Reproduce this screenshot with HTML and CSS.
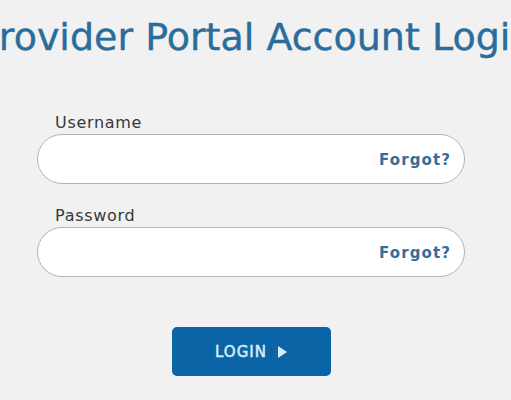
FILE: index.html
```html
<!DOCTYPE html>
<html lang="en">
<head>
<meta charset="utf-8">
<title>Provider Portal Account Login</title>
<link rel="stylesheet" href="styles.css">
</head>
<body>
  <header class="title-wrap">
    <h1 class="title">Provider Portal Account Login</h1>
  </header>
  <form class="login-form">
    <label class="field-label" for="username">Username</label>
    <div class="field">
      <input class="field-input" id="username" type="text">
      <a class="forgot" href="#">Forgot?</a>
    </div>
    <label class="field-label field-label--second" for="password">Password</label>
    <div class="field">
      <input class="field-input" id="password" type="password">
      <a class="forgot" href="#">Forgot?</a>
    </div>
    <div class="actions">
      <button class="login-btn" type="button">LOGIN<svg class="arrow" width="9" height="12" viewBox="0 0 9 12"><path d="M0 0 L9 6 L0 12 Z" fill="currentColor"/></svg></button>
    </div>
  </form>
</body>
</html>
```
FILE: styles.css
```css
html, body {
  margin: 0;
  padding: 0;
  background: #f1f1f1;
  font-family: "DejaVu Sans", "Liberation Sans", sans-serif;
}
body {
  width: 511px;
  height: 400px;
  overflow: hidden;
}
.title-wrap {
  display: flex;
  justify-content: center;
  overflow: hidden;
  padding-top: 15px;
}
.title {
  flex: none;
  margin: 0;
  white-space: nowrap;
  font-size: 38px;
  line-height: 44px;
  font-weight: normal;
  color: #2a6c9c;
  letter-spacing: 0;
  -webkit-text-stroke: 0.4px #2a6c9c;
}
.login-form {
  width: 428px;
  margin-left: 37px;
  padding-top: 54px;
  display: flex;
  flex-direction: column;
}
.field-label {
  display: block;
  font-size: 16px;
  line-height: 19px;
  color: #383838;
  padding-left: 18px;
  letter-spacing: 0.7px;
  margin-bottom: 2px;
}
.field-label--second {
  margin-top: 22px;
}
.field {
  position: relative;
  height: 50px;
  box-sizing: border-box;
  border: 1px solid #b3b3b3;
  border-radius: 25px;
  background: #fff;
  display: flex;
  align-items: center;
  padding: 0 13px 0 20px;
}
.field-input {
  flex: 1;
  border: 0;
  outline: none;
  background: transparent;
  font-size: 16px;
  height: 40px;
  min-width: 0;
}
.forgot {
  font-size: 15px;
  font-weight: bold;
  color: #356f98;
  text-decoration: none;
  letter-spacing: 1.1px;
  padding-top: 2px;
}
.actions {
  display: flex;
  justify-content: center;
  margin-top: 50px;
}
.login-btn {
  width: 159px;
  height: 49px;
  border: 0;
  border-radius: 5px;
  background: #0b64a5;
  color: #d9ecf8;
  font-family: "DejaVu Sans", "Liberation Sans", sans-serif;
  font-size: 15px;
  font-weight: normal;
  -webkit-text-stroke: 0.5px #d9ecf8;
  letter-spacing: 1px;
  display: flex;
  align-items: center;
  justify-content: center;
  gap: 11px;
  padding: 0 0 0 0;
}
.arrow {
  display: block;
}
```
